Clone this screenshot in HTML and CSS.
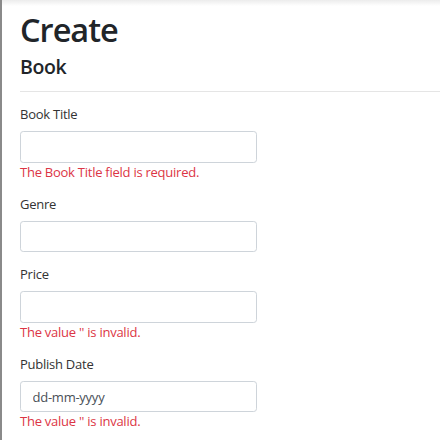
FILE: index.html
```html
<!DOCTYPE html>
<html lang="en">
<head>
<meta charset="utf-8">
<title>Create</title>
<link rel="stylesheet" href="styles.css">
</head>
<body>
<div class="topshade"></div>
<main class="container">
  <h1 class="title">Create</h1>
  <h4 class="subtitle">Book</h4>
  <hr class="rule">
  <form class="form">
    <div class="form-group">
      <label class="control-label">Book Title</label>
      <input class="form-control" type="text">
      <span class="text-danger">The Book Title field is required.</span>
    </div>
    <div class="form-group">
      <label class="control-label">Genre</label>
      <input class="form-control" type="text">
    </div>
    <div class="form-group">
      <label class="control-label">Price</label>
      <input class="form-control" type="text">
      <span class="text-danger">The value '' is invalid.</span>
    </div>
    <div class="form-group">
      <label class="control-label">Publish Date</label>
      <input class="form-control date" type="text" value="dd-mm-yyyy" readonly>
      <span class="text-danger">The value '' is invalid.</span>
    </div>
  </form>
</main>
</body>
</html>
```
FILE: styles.css
```css
html, body {
  margin: 0;
  padding: 0;
  background: #fff;
}
body {
  font-family: "Open Sans", "Noto Sans", sans-serif;
  font-size: 13px;
  line-height: 1.5;
  letter-spacing: -0.25px;
  color: #212529;
  border-left: 2px solid #8a8a8a;
  min-height: 440px;
  box-sizing: border-box;
  overflow: hidden;
}
.topshade {
  height: 6px;
  background: linear-gradient(#ececec, #fff);
  margin-bottom: 3.6px;
}
.container {
  padding: 0 0 0 18px;
}
.title {
  font-size: 32.5px;
  font-weight: 600;
  letter-spacing: -1px;
  line-height: 1.2;
  margin: 0 0 6.5px;
}
.subtitle {
  font-size: 19.5px;
  font-weight: 600;
  letter-spacing: -0.4px;
  line-height: 1.2;
  margin: 0;
}
.rule {
  margin: 13px 0;
  border: 0;
  border-top: 1px solid rgba(0,0,0,.1);
}
.form {
  width: 237px;
}
.form-group {
  margin-bottom: 13px;
}
.control-label {
  display: inline-block;
  margin-bottom: 6.5px;
  color: #333;
}
.form-control {
  display: block;
  width: 100%;
  height: 31.25px;
  box-sizing: border-box;
  padding: 4.875px 9.75px;
  font-family: inherit;
  font-size: 13px;
  line-height: 1.5;
  letter-spacing: -0.25px;
  color: #495057;
  background: #fff;
  border: 1px solid #ced4da;
  border-radius: 3.25px;
  margin: 0;
  outline: none;
}
.form-control.date {
  padding-left: 11.5px;
}
.text-danger {
  color: #dc3545;
}
```
